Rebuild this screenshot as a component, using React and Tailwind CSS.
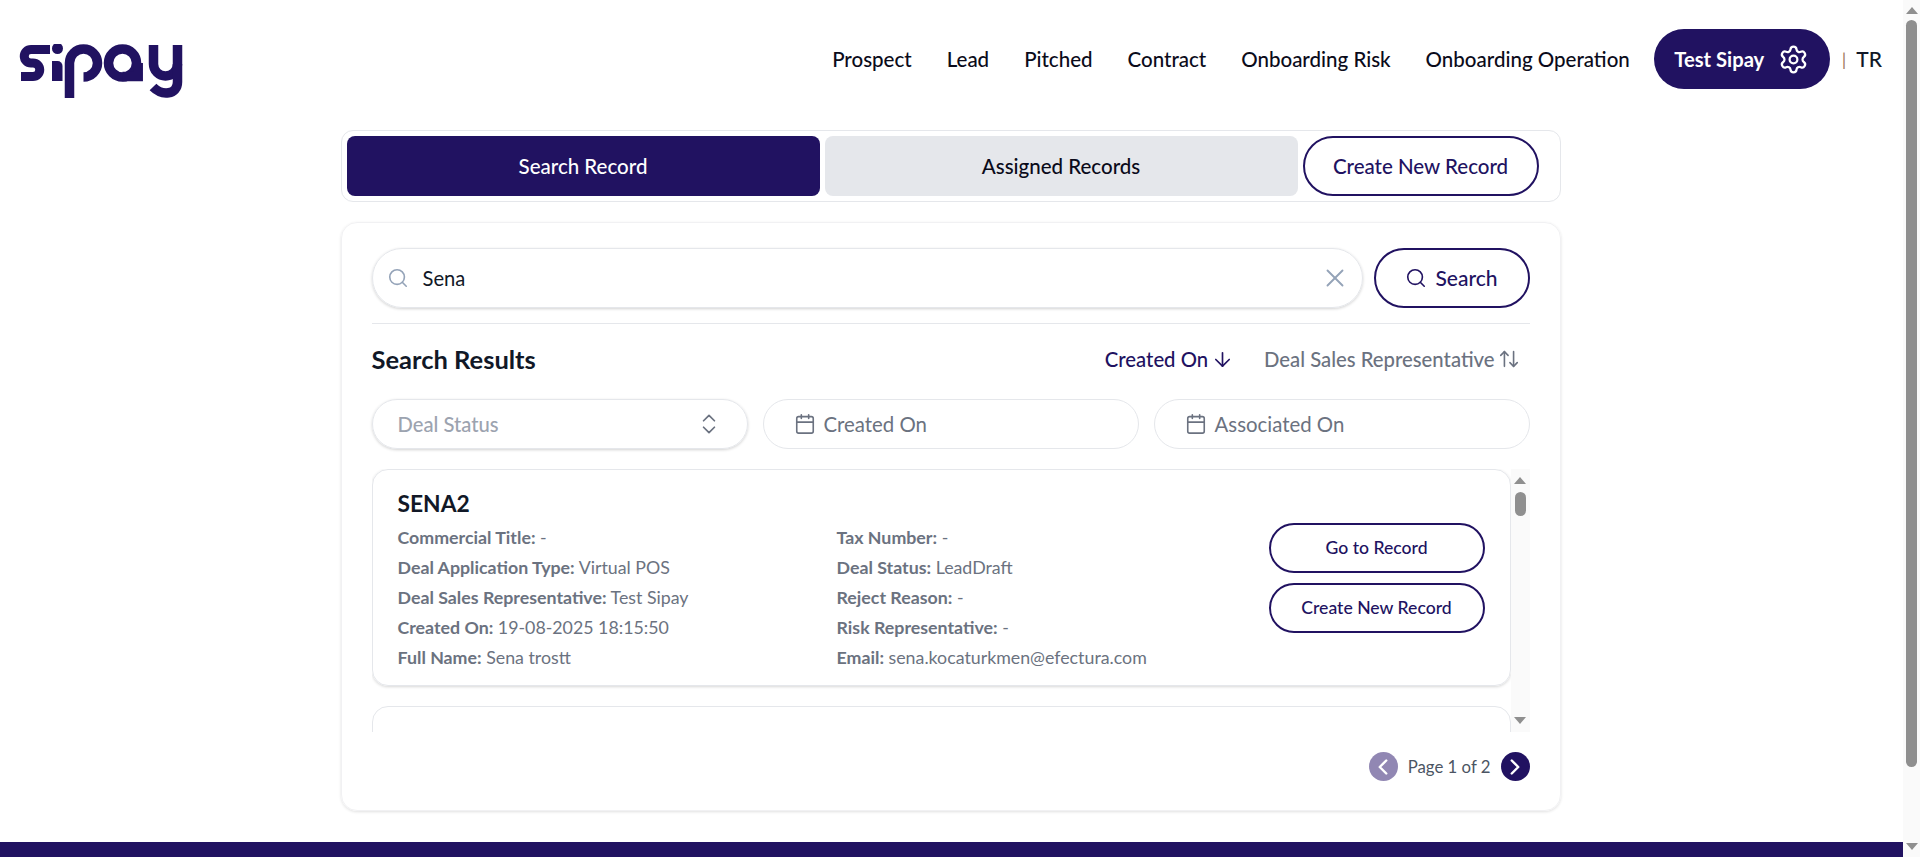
import { Search, X, ChevronsUpDown, ArrowDown, ArrowUpDown, Calendar, Settings, ChevronLeft, ChevronRight } from 'lucide-react';

const navItems = ['Prospect', 'Lead', 'Pitched', 'Contract', 'Onboarding Risk', 'Onboarding Operation'];

const leftRows = [
  ['Commercial Title:', '-'],
  ['Deal Application Type:', 'Virtual POS'],
  ['Deal Sales Representative:', 'Test Sipay'],
  ['Created On:', '19-08-2025 18:15:50'],
  ['Full Name:', 'Sena trostt'],
];

const rightRows = [
  ['Tax Number:', '-'],
  ['Deal Status:', 'LeadDraft'],
  ['Reject Reason:', '-'],
  ['Risk Representative:', '-'],
  ['Email:', 'sena.kocaturkmen@efectura.com'],
];

// viewBox uses the logo's own page coordinates
const Logo = () => (
  <svg width="164" height="56" viewBox="19 44 164 56" fill="none" stroke="#211261" strokeWidth="9.5" className="shrink-0 mt-[26px]">
    <path d="M50 49.500H31A6.750 6.750 0 0 0 31 63H33A6.750 6.750 0 0 1 33 76.500H21" strokeWidth="9" />
    <circle cx="57.500" cy="48.500" r="5.500" fill="#211261" stroke="none" />
    <path d="M52 61H57.500A5 5 0 0 1 62.500 66V81H52Z" fill="#211261" stroke="none" />
    <path d="M69.500 98V63A14 14 0 1 1 83.500 77" />
    <circle cx="122.500" cy="63" r="14" />
    <path d="M138.200 63V76.500H122.500" />
    <path d="M153.500 45V64A12 12 0 0 0 177.500 64" />
    <path d="M177.500 45V82C177.500 95 162 96 153 87" />
  </svg>
);

const Row = ({ label, value }) => (
  <div className="text-[17.8px] leading-[30px] text-[#6b7280] whitespace-nowrap">
    <span className="font-bold">{label}</span> {value}
  </div>
);

const App = () => {
  return (
    <div className="flex h-[857px] overflow-hidden bg-white font-['Lato',sans-serif] text-[#111827]">
      <div className="flex-1 flex flex-col min-w-0">
        {/* Header */}
        <header className="h-[118px] shrink-0 flex items-center justify-between pl-[19px] pr-[21px]">
          <Logo />
          <nav className="flex items-center">
            <div className="flex items-center gap-[35px] text-[20.5px] font-medium text-[#0b0b1a]">
              {navItems.map((item) => (
                <span key={item}>{item}</span>
              ))}
            </div>
            <div className="ml-[24px] w-[176px] h-[60px] rounded-full bg-[#211261] text-white flex items-center justify-center gap-[14px]">
              <span className="text-[20.2px] font-bold">Test Sipay</span>
              <Settings className="w-[31px] h-[31px]" strokeWidth={1.75} />
            </div>
            <span className="ml-[12px] text-[#a07a5c] text-[18px]">|</span>
            <span className="ml-[10px] text-[21px] font-medium">TR</span>
          </nav>
        </header>

        {/* Main */}
        <main className="flex-1 flex flex-col items-center pt-[12px]">
          <div className="w-[1220px] ml-[-2px]">
            <div className="h-[72px] border border-[#e5e7eb] rounded-xl flex items-center gap-[5px] px-[5px]">
              <button className="w-[473px] h-[60px] rounded-lg bg-[#211261] text-white text-[20.5px] font-medium">Search Record</button>
              <button className="w-[473px] h-[60px] rounded-lg bg-[#e5e7eb] text-[#0b0b1a] text-[20.5px] font-medium">Assigned Records</button>
              <button className="w-[236px] h-[60px] rounded-full border-2 border-[#211261] text-[#211261] text-[20.5px] font-medium">Create New Record</button>
            </div>

            <div className="mt-[20px] h-[589px] rounded-2xl border border-[#f1f1f3] shadow-[0_1px_3px_rgba(0,0,0,0.12)] px-[30px] pt-[25px]">
              {/* Search row */}
              <div className="flex gap-[11px]">
                <div className="flex-1 h-[60px] rounded-full border border-[#e5e7eb] shadow-[0_1px_3px_rgba(0,0,0,0.18)] flex items-center pl-[14px] pr-[12px]">
                  <Search className="w-[22px] h-[22px] text-[#94a3b8]" strokeWidth={1.75} />
                  <span className="ml-[14px] text-[20.2px] text-[#111827]">Sena</span>
                  <X className="ml-auto w-[30px] h-[30px] text-[#94a3b8]" strokeWidth={1.5} />
                </div>
                <button className="w-[156px] h-[60px] rounded-full border-2 border-[#211261] text-[#211261] text-[21px] font-medium flex items-center justify-center gap-[8px]">
                  <Search className="w-[22px] h-[22px]" strokeWidth={1.75} />
                  Search
                </button>
              </div>
              <div className="mt-[15px] border-t border-[#e5e7eb]" />

              {/* Results heading */}
              <div className="mt-[20px] h-[30px] flex items-center justify-between pr-[10px]">
                <h2 className="text-[25.5px] font-bold text-[#111827]">Search Results</h2>
                <div className="flex items-center gap-[30px] text-[20.3px] font-medium">
                  <span className="flex items-center gap-[3px] text-[#211261]">
                    Created On
                    <ArrowDown className="w-[23px] h-[23px]" strokeWidth={1.75} />
                  </span>
                  <span className="flex items-center gap-[3px] text-[#6b7280]">
                    Deal Sales Representative
                    <ArrowUpDown className="w-[22px] h-[22px]" strokeWidth={1.75} />
                  </span>
                </div>
              </div>

              {/* Filters */}
              <div className="mt-[25px] grid grid-cols-3 gap-[15px]">
                <div className="h-[50px] rounded-full border border-[#e5e7eb] shadow-[0_1px_3px_rgba(0,0,0,0.18)] flex items-center justify-between pl-[25px] pr-[25px] text-[20.2px] font-medium text-[#9ca3af]">
                  Deal Status
                  <ChevronsUpDown className="w-[26px] h-[26px] text-[#6b7280]" strokeWidth={1.6} />
                </div>
                {['Created On', 'Associated On'].map((item) => (
                  <div key={item} className="h-[50px] rounded-full border border-[#e5e7eb] flex items-center pl-[30px] gap-[8px] text-[20.4px] text-[#6b7280]">
                    <Calendar className="w-[22px] h-[22px]" strokeWidth={1.75} />
                    {item}
                  </div>
                ))}
              </div>

              {/* Results list */}
              <div className="mt-[20px] h-[263px] flex overflow-hidden">
                <div className="w-[1139px] shrink-0 flex flex-col gap-[20px]">
                  <div className="h-[217px] shrink-0 rounded-2xl border border-[#e5e7eb] shadow-[0_1px_3px_rgba(0,0,0,0.16)] pl-[25px] pr-[25px] pt-[19px] flex">
                    <div className="flex-1 min-w-0">
                      <h3 className="text-[22.8px] leading-[28px] font-bold text-[#111827]">SENA2</h3>
                      <div className="mt-[5px] grid grid-cols-[439px_1fr]">
                        <div>
                          {leftRows.map(([label, value]) => (
                            <Row key={label} label={label} value={value} />
                          ))}
                        </div>
                        <div>
                          {rightRows.map(([label, value]) => (
                            <Row key={label} label={label} value={value} />
                          ))}
                        </div>
                      </div>
                    </div>
                    <div className="w-[216px] shrink-0 flex flex-col gap-[10px] pt-[34px]">
                      <button className="h-[50px] rounded-full border-2 border-[#211261] text-[#211261] text-[17.6px] font-medium">Go to Record</button>
                      <button className="h-[50px] rounded-full border-2 border-[#211261] text-[#211261] text-[17.6px] font-medium">Create New Record</button>
                    </div>
                  </div>
                  <div className="h-[100px] shrink-0 rounded-2xl border border-[#e5e7eb]" />
                </div>
                {/* Inner scrollbar */}
                <div className="w-[19px] bg-[#fafafa] flex flex-col items-center">
                  <div className="mt-[8px] w-0 h-0 border-x-[6px] border-x-transparent border-b-[7px] border-b-[#8f8f8f]" />
                  <div className="mt-[8px] w-[11px] h-[24px] rounded-full bg-[#8f8f8f]" />
                  <div className="mt-auto mb-[8px] w-0 h-0 border-x-[6px] border-x-transparent border-t-[7px] border-t-[#8f8f8f]" />
                </div>
              </div>

              {/* Pagination */}
              <div className="mt-[20px] flex items-center justify-end gap-[10px]">
                <span className="w-[29px] h-[29px] rounded-full bg-[#9187b3] text-white flex items-center justify-center">
                  <ChevronLeft className="w-[26px] h-[26px]" strokeWidth={2.25} />
                </span>
                <span className="text-[16.8px] text-[#4b5563]">Page 1 of 2</span>
                <span className="w-[29px] h-[29px] rounded-full bg-[#211261] text-white flex items-center justify-center">
                  <ChevronRight className="w-[26px] h-[26px]" strokeWidth={2.25} />
                </span>
              </div>
            </div>
          </div>
        </main>

        <footer className="h-[15px] shrink-0 bg-[#211261]" />
      </div>

      {/* Page scrollbar */}
      <div className="w-[17px] shrink-0 bg-[#fafafa] flex flex-col items-center">
        <div className="mt-[7px] w-0 h-0 border-x-[6px] border-x-transparent border-b-[7px] border-b-[#8f8f8f]" />
        <div className="mt-[6px] w-[11px] h-[747px] rounded-full bg-[#8f8f8f]" />
        <div className="mt-auto mb-[7px] w-0 h-0 border-x-[6px] border-x-transparent border-t-[7px] border-t-[#8f8f8f]" />
      </div>
    </div>
  );
};

export default App;
